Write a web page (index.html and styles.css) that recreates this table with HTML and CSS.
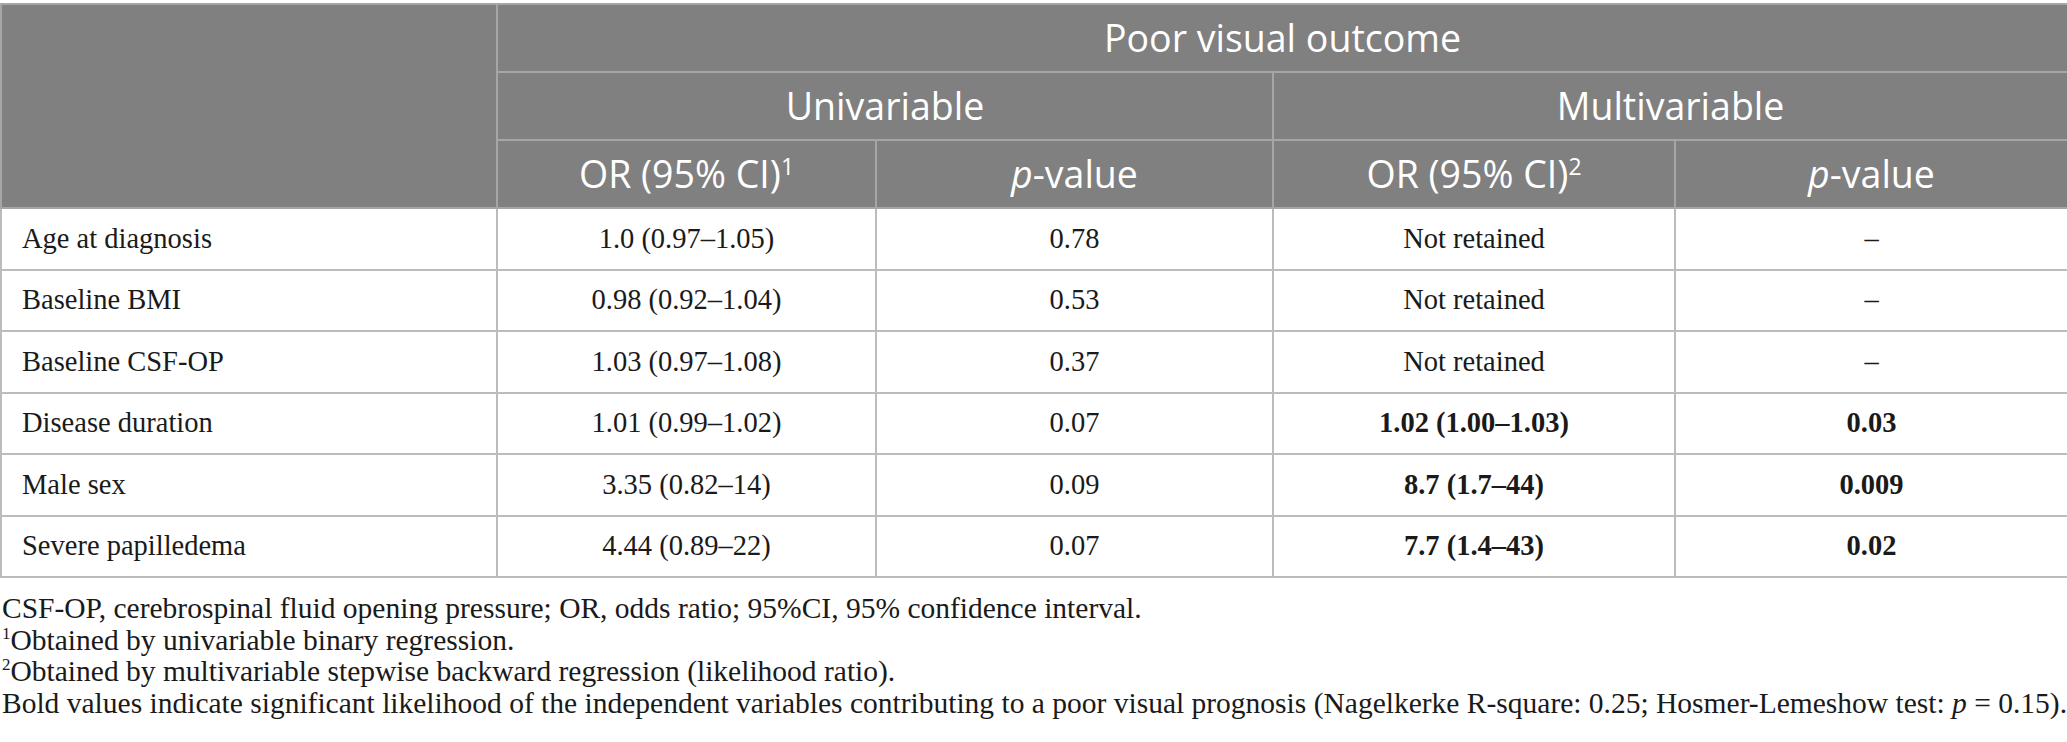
FILE: index.html
```html
<!DOCTYPE html>
<html lang="en">
<head>
<meta charset="utf-8">
<title>Poor visual outcome</title>
<link rel="stylesheet" href="styles.css">
</head>
<body>
<table class="tbl">
  <colgroup>
    <col class="c1"><col class="c2"><col class="c3"><col class="c4"><col class="c5">
  </colgroup>
  <thead>
    <tr class="hrow">
      <th rowspan="3" class="blank"></th>
      <th colspan="4">Poor visual outcome</th>
    </tr>
    <tr class="hrow">
      <th colspan="2">Univariable</th>
      <th colspan="2">Multivariable</th>
    </tr>
    <tr class="hrow">
      <th>OR (95% CI)<sup>1</sup></th>
      <th><i>p</i>-value</th>
      <th>OR (95% CI)<sup>2</sup></th>
      <th><i>p</i>-value</th>
    </tr>
  </thead>
  <tbody>
    <tr><td class="lbl">Age at diagnosis</td><td>1.0 (0.97–1.05)</td><td>0.78</td><td>Not retained</td><td>–</td></tr>
    <tr><td class="lbl">Baseline BMI</td><td>0.98 (0.92–1.04)</td><td>0.53</td><td>Not retained</td><td>–</td></tr>
    <tr><td class="lbl">Baseline CSF-OP</td><td>1.03 (0.97–1.08)</td><td>0.37</td><td>Not retained</td><td>–</td></tr>
    <tr><td class="lbl">Disease duration</td><td>1.01 (0.99–1.02)</td><td>0.07</td><td class="b">1.02 (1.00–1.03)</td><td class="b">0.03</td></tr>
    <tr><td class="lbl">Male sex</td><td>3.35 (0.82–14)</td><td>0.09</td><td class="b">8.7 (1.7–44)</td><td class="b">0.009</td></tr>
    <tr><td class="lbl">Severe papilledema</td><td>4.44 (0.89–22)</td><td>0.07</td><td class="b">7.7 (1.4–43)</td><td class="b">0.02</td></tr>
  </tbody>
</table>
<div class="notes">
  <p>CSF-OP, cerebrospinal fluid opening pressure; OR, odds ratio; 95%CI, 95% confidence interval.</p>
  <p><sup>1</sup>Obtained by univariable binary regression.</p>
  <p><sup>2</sup>Obtained by multivariable stepwise backward regression (likelihood ratio).</p>
  <p>Bold values indicate significant likelihood of the independent variables contributing to a poor visual prognosis (Nagelkerke R-square: 0.25; Hosmer-Lemeshow test: <i>p</i> = 0.15).</p>
</div>
</body>
</html>
```

FILE: styles.css
```css
html, body {
  margin: 0;
  padding: 0;
  background: #ffffff;
}
body {
  padding-top: 3px;
  font-family: "Liberation Serif", "Times New Roman", serif;
  color: #1a1a1a;
}
.tbl {
  width: 2067px;
  border-collapse: collapse;
  table-layout: fixed;
}
.c1 { width: 496px; }
.c2 { width: 379px; }
.c3 { width: 397px; }
.c4 { width: 402px; }
.c5 { width: 393px; }

.tbl th {
  background: #7f807f;
  color: #ffffff;
  font-family: "Open Sans", "Noto Sans", sans-serif;
  font-weight: 370;
  font-size: 37.5px;
  height: 66px;
  padding: 0;
  border: 2px solid #a6a6a6;
  text-align: center;
  vertical-align: middle;
  line-height: 1;
}
.tbl th sup {
  font-size: 23px;
  vertical-align: 13px;
  line-height: 0;
}
.tbl th i {
  font-style: italic;
}
.tbl td {
  font-size: 28.5px;
  height: 59.5px;
  padding: 0;
  border: 2px solid #bcbcbc;
  text-align: center;
  vertical-align: middle;
  line-height: 1;
}
.tbl td.lbl {
  text-align: left;
  padding-left: 20px;
}
.tbl td.b {
  font-weight: 700;
}
.notes {
  padding-top: 15px;
  padding-left: 2px;
  font-size: 29.5px;
}
.notes p {
  margin: 0;
  line-height: 31.5px;
}
.notes sup {
  font-size: 17px;
  vertical-align: 11px;
  line-height: 0;
}
```
